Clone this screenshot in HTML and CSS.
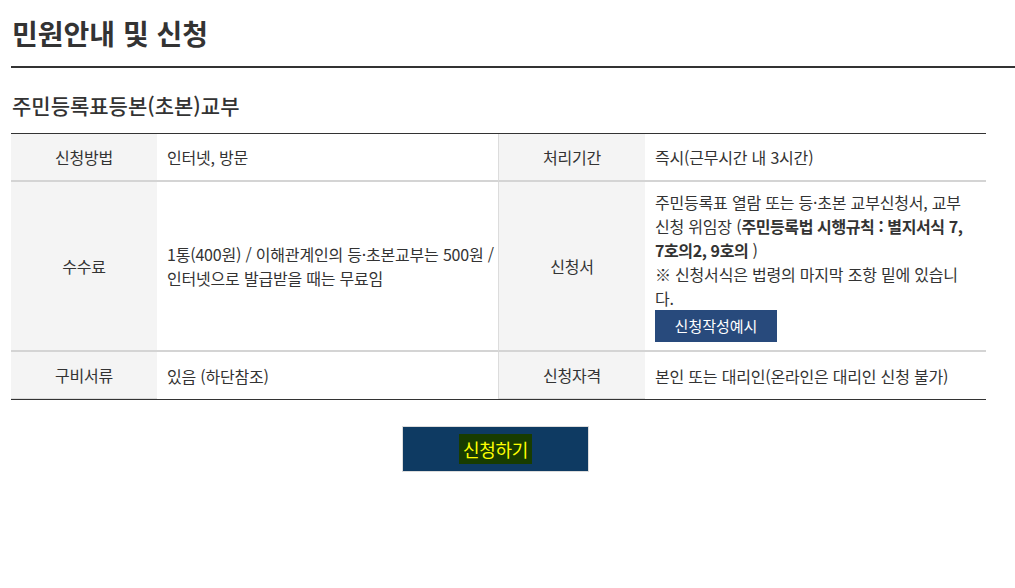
FILE: index.html
```html
<!DOCTYPE html>
<html lang="ko">
<head>
    <meta charset="UTF-8" />
    <title>민원안내 및 신청</title>
    <link rel="stylesheet" href="styles.css">
</head>
<body>
<div class="page">
    <h1 class="page-title">민원안내 및 신청</h1>

    <h2 class="sub-title">주민등록표등본(초본)교부</h2>

    <table class="info-table">
        <colgroup>
            <col class="col-th">
            <col class="col-td">
            <col class="col-th2">
            <col class="col-td">
        </colgroup>
        <tr>
            <th>신청방법</th>
            <td>인터넷, 방문</td>
            <th class="th-right">처리기간</th>
            <td class="td-right">즉시(근무시간 내 3시간)</td>
        </tr>
        <tr>
            <th>수수료</th>
            <td>1통(400원) / 이해관계인의 등·초본교부는 500원 / 인터넷으로 발급받을 때는 무료임</td>
            <th class="th-right">신청서</th>
            <td class="td-right form-cell">
                주민등록표 열람 또는 등·초본 교부신청서, 교부 신청 위임장 (<strong>주민등록법 시행규칙 : 별지서식 7, 7호의2, 9호의</strong> )<br>
                ※ 신청서식은 법령의 마지막 조항 밑에 있습니다.
                <div><a class="sample-btn" href="#">신청작성예시</a></div>
            </td>
        </tr>
        <tr class="last-row">
            <th>구비서류</th>
            <td>있음 (하단참조)</td>
            <th class="th-right">신청자격</th>
            <td class="td-right">본인 또는 대리인(온라인은 대리인 신청 불가)</td>
        </tr>
    </table>

    <div class="apply-area">
        <a class="apply-btn" href="#"><span class="apply-text">신청하기</span></a>
    </div>
</div>
</body>
</html>
```

FILE: styles.css
```css
* {
    box-sizing: border-box;
}

body {
    margin: 0;
    font-family: "Noto Sans CJK KR", "Noto Sans", sans-serif;
    color: #333;
    background: #fff;
}

.page {
    padding-left: 11px;
}

/* Titles */
.page-title {
    margin: 0;
    padding: 14px 0 14px 1px;
    font-size: 28px;
    line-height: 38px;
    font-weight: bold;
    color: #333;
    border-bottom: 2px solid #333;
}

.sub-title {
    margin: 22px 0 13px;
    padding-left: 1px;
    font-size: 21px;
    line-height: 30px;
    font-weight: 500;
    color: #333;
}

/* Info table */
.info-table {
    width: 975px;
    table-layout: fixed;
    border-collapse: separate;
    border-spacing: 0;
    border-top: 1px solid #333;
    border-bottom: 1px solid #333;
    font-size: 16px;
    line-height: 24px;
    letter-spacing: -0.2px;
}

.col-th { width: 146px; }
.col-th2 { width: 147px; }
.col-td { width: 341px; }

.info-table th,
.info-table td {
    padding: 11px 2px 11px 10px;
    vertical-align: middle;
    border-bottom: 2px solid #d4d4d4;
}

.info-table th {
    padding: 11px 10px;
    background: #f4f4f4;
    font-weight: normal;
    text-align: center;
    color: #333;
}

.info-table td {
    text-align: left;
}

.info-table .td-right {
    padding-right: 18px;
}

.info-table .th-right {
    border-left: 1px solid #dcdcdc;
}

.info-table .last-row td {
    border-bottom: none;
}

.info-table .last-row th {
    border-bottom: 1px solid #dcdcdc;
}

.info-table .form-cell {
    padding-top: 8px;
    padding-bottom: 8px;
}

.form-cell strong {
    letter-spacing: -0.4px;
}

.sample-btn {
    display: inline-block;
    width: 122px;
    height: 32px;
    line-height: 32px;
    text-align: center;
    background: #284a7c;
    color: #fff;
    text-decoration: none;
    font-size: 15px;
    letter-spacing: 0;
}

/* Apply button */
.apply-area {
    width: 975px;
    padding-right: 6px;
    margin-top: 26px;
    text-align: center;
}

.apply-btn {
    display: inline-block;
    width: 187px;
    height: 46px;
    line-height: 44px;
    border: 1px solid #dcdcdc;
    background: #0e3a62;
    text-decoration: none;
}

.apply-text {
    background: #183c00;
    color: #ffff00;
    font-size: 18px;
    letter-spacing: -0.3px;
    padding: 2px 4px;
}
```
